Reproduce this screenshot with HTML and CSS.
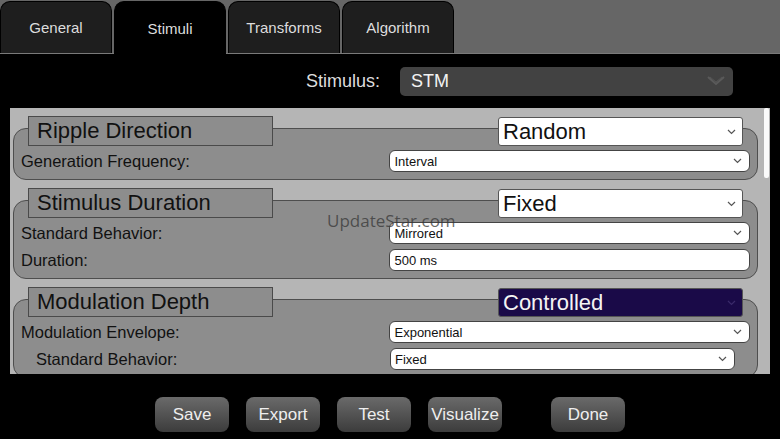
FILE: index.html
```html
<!DOCTYPE html>
<html lang="en">
<head>
  <meta charset="UTF-8">
  <meta name="viewport" content="width=device-width, initial-scale=1.0">
  <title>Stimuli</title>
  <link rel="stylesheet" href="styles.css">
</head>
<body>
  <div class="tabs">
    <div class="tab">General</div>
    <div class="tab active">Stimuli</div>
    <div class="tab">Transforms</div>
    <div class="tab">Algorithm</div>
  </div>

  <div class="stim-row">
    <span class="stim-label">Stimulus:</span>
    <div class="stim-select">
      <span>STM</span>
      <svg class="chev" width="18" height="10" viewBox="0 0 18 10"><path d="M1 1 L9 8 L17 1" fill="none" stroke="#5a5a5a" stroke-width="2"/><path d="M3 1 L9 6 L15 1" fill="none" stroke="#555" stroke-width="1"/></svg>
    </div>
  </div>

  <div class="panel">
    <div class="panel-content">

      <div class="group">
        <div class="group-head">
          <div class="group-title">Ripple Direction</div>
          <div class="big-select"><span>Random</span><svg class="chev-s" width="9" height="6" viewBox="0 0 9 6"><path d="M1 1 L4.5 4.5 L8 1" fill="none" stroke="#555" stroke-width="1.2"/></svg></div>
        </div>
        <div class="group-body">
          <div class="row">
            <span class="label">Generation Frequency:</span>
            <div class="field"><span>Interval</span><svg class="chev-s" width="9" height="6" viewBox="0 0 9 6"><path d="M1 1 L4.5 4.5 L8 1" fill="none" stroke="#555" stroke-width="1.2"/></svg></div>
          </div>
        </div>
      </div>

      <div class="group">
        <div class="group-head">
          <div class="group-title">Stimulus Duration</div>
          <div class="big-select"><span>Fixed</span><svg class="chev-s" width="9" height="6" viewBox="0 0 9 6"><path d="M1 1 L4.5 4.5 L8 1" fill="none" stroke="#555" stroke-width="1.2"/></svg></div>
        </div>
        <div class="group-body">
          <div class="row">
            <span class="label">Standard Behavior:</span>
            <div class="field"><span>Mirrored</span><svg class="chev-s" width="9" height="6" viewBox="0 0 9 6"><path d="M1 1 L4.5 4.5 L8 1" fill="none" stroke="#555" stroke-width="1.2"/></svg></div>
          </div>
          <div class="row">
            <span class="label">Duration:</span>
            <div class="field"><span>500 ms</span></div>
          </div>
        </div>
      </div>

      <div class="group">
        <div class="group-head">
          <div class="group-title">Modulation Depth</div>
          <div class="big-select dark"><span>Controlled</span><svg class="chev-s" width="9" height="6" viewBox="0 0 9 6"><path d="M1 1 L4.5 4.5 L8 1" fill="none" stroke="#3a2a6a" stroke-width="1.2"/></svg></div>
        </div>
        <div class="group-body">
          <div class="row">
            <span class="label">Modulation Envelope:</span>
            <div class="field"><span>Exponential</span><svg class="chev-s" width="9" height="6" viewBox="0 0 9 6"><path d="M1 1 L4.5 4.5 L8 1" fill="none" stroke="#555" stroke-width="1.2"/></svg></div>
          </div>
          <div class="row sub">
            <span class="label">Standard Behavior:</span>
            <div class="field"><span>Fixed</span><svg class="chev-s" width="9" height="6" viewBox="0 0 9 6"><path d="M1 1 L4.5 4.5 L8 1" fill="none" stroke="#555" stroke-width="1.2"/></svg></div>
          </div>
        </div>
      </div>

    </div>
    <div class="scroll"><div class="thumb"></div></div>
  </div>

  <div class="buttons">
    <div class="btn">Save</div>
    <div class="btn">Export</div>
    <div class="btn">Test</div>
    <div class="btn">Visualize</div>
    <div class="btn done">Done</div>
  </div>

  <div class="watermark">UpdateStar.com</div>
</body>
</html>
```

FILE: styles.css
```css
body { margin: 0; background: #000; font-family: "Liberation Sans", Arial, sans-serif; width: 780px; height: 439px; overflow: hidden; position: relative; }

.tabs { display: flex; height: 52px; background: #666; border-bottom: 1px solid #7a7a7a; padding-top: 1px; }
.tab { width: 112px; margin-right: 2px; background: #1e1e1e; border: 1px solid #000; border-bottom: none; border-radius: 10px 10px 0 0; color: #ddd; font-size: 15px; display: flex; align-items: center; justify-content: center; box-sizing: border-box; }
.tab.active { background: #000; margin-bottom: -1px; }

.stim-row { height: 54px; display: flex; align-items: center; justify-content: flex-end; padding-right: 47px; }
.stim-label { color: #ddd; font-size: 18px; margin-right: 20px; }
.stim-select { width: 333px; height: 29px; background: #424242; border-radius: 5px; display: flex; align-items: center; justify-content: space-between; padding: 0 8px 0 11px; box-sizing: border-box; color: #f2f2f2; font-size: 18px; }

.panel { margin-left: 10px; width: 760px; height: 266px; background: #b5b5b5; display: flex; overflow: hidden; }
.panel-content { width: 748px; padding: 8px 0 0 3px; box-sizing: border-box; }
.scroll { width: 12px; }
.thumb { margin: 0 0 0 6px; width: 5px; height: 70px; background: #fafafa; border-radius: 2px; }

.group { width: 745px; margin-bottom: 8px; }
.group-head { position: relative; z-index: 1; display: flex; justify-content: space-between; align-items: flex-start; height: 30px; padding: 0 15px; }
.group-title { width: 245px; height: 30px; box-sizing: border-box; background: #8d8d8d; border: 1px solid #4a4a4a; font-size: 22px; color: #111; padding-left: 8px; line-height: 28px; }
.big-select { width: 245px; height: 29px; margin-top: 1px; box-sizing: border-box; background: #fff; border: 1px solid #555; border-radius: 3px; display: flex; align-items: center; justify-content: space-between; padding: 0 6px 0 4px; font-size: 22px; color: #111; }
.big-select.dark { background: #1a0a48; color: #f4f4f4; }

.group-body { margin-top: -18px; background: #8d8d8d; border: 1px solid #4e4e4e; border-radius: 13px; padding: 21px 7px 7px 7px; display: flex; flex-direction: column; gap: 5px; }
.row { display: flex; align-items: center; height: 22px; }
.label { width: 369px; font-size: 16.5px; color: #111; }
.row.sub .label { padding-left: 15px; box-sizing: border-box; }
.row.sub .field { width: 345px; }
.field { width: 361px; height: 22px; box-sizing: border-box; background: #fff; border: 1px solid #444; border-radius: 6px; display: flex; align-items: center; justify-content: space-between; padding: 0 7px 0 4px; font-size: 13px; color: #111; }

.buttons { display: flex; padding: 23px 0 0 155px; gap: 17px; }
.btn { width: 74px; height: 35px; border-radius: 8px; background: linear-gradient(#6a6a6a, #3c3c3c); color: #eee; font-size: 17px; display: flex; align-items: center; justify-content: center; }
.btn.done { margin-left: 32px; }

.watermark { position: absolute; left: 327px; top: 209px; font-family: "Open Sans", sans-serif; font-size: 17px; color: rgba(55, 55, 55, 0.75); }
```
